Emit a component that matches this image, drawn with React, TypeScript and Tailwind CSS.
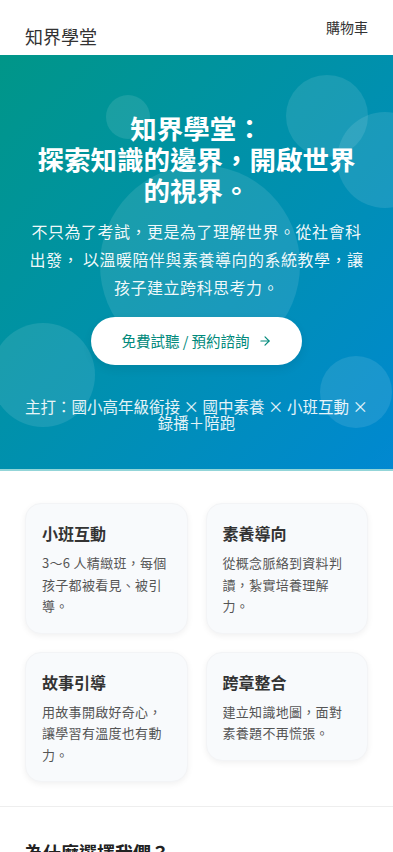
import React from "react";
import { ArrowRight } from "lucide-react";

const features = [
  { title: "小班互動", desc: "3～6 人精緻班，每個孩子都被看見、被引導。" },
  { title: "素養導向", desc: "從概念脈絡到資料判讀，紮實培養理解力。" },
  { title: "故事引導", desc: "用故事開啟好奇心，讓學習有溫度也有動力。" },
  { title: "跨章整合", desc: "建立知識地圖，面對素養題不再慌張。" },
];

const FeatureCard: React.FC<{ title: string; desc: string }> = ({ title, desc }) => (
  <div className="rounded-2xl border border-gray-100 bg-[#f8fafc] px-4 pt-[17px] pb-[16px] shadow-[0_2px_6px_rgba(0,0,0,0.06)]">
    <h3 className="text-[16px] font-bold leading-6 text-[#333]">{title}</h3>
    <p className="mt-[7px] text-[13px] leading-[21.5px] tracking-[0.3px] text-[#555]">{desc}</p>
  </div>
);

export default function App() {
  return (
    <div className="min-h-screen bg-white font-['Noto_Sans_CJK_TC','Noto_Sans',sans-serif] text-[#333]">
      <header className="flex h-[55px] items-start justify-between bg-white px-[25px]">
        <a href="#" className="pt-[23px] text-[18px] leading-[27px] text-[#333]">
          知界學堂
        </a>
        <a href="#" className="pt-[17px] text-[14px] leading-[21px] text-[#333]">
          購物車
        </a>
      </header>

      <section className="relative overflow-hidden border-b-2 border-[#93d5d8] bg-gradient-to-br from-[#009688] to-[#0288d1] px-6 pt-[57px] pb-[39px] text-center text-white">
        {/* decorative bubbles */}
        <div className="absolute left-[286px] top-[20px] h-[82px] w-[82px] rounded-full bg-white/10" />
        <div className="absolute left-[106px] top-[40px] h-[44px] w-[44px] rounded-full bg-white/10" />
        <div className="absolute left-[337px] top-[57px] h-[96px] w-[96px] rounded-full bg-white/10" />
        <div className="absolute left-[100px] top-[110px] h-[200px] w-[200px] rounded-full bg-white/10" />
        <div className="absolute left-[-9px] top-[268px] h-[104px] w-[104px] rounded-full bg-white/10" />
        <div className="absolute left-[320px] top-[301px] h-[72px] w-[72px] rounded-full bg-white/10" />

        <div className="relative">
          <h1 className="text-[26.5px] font-bold leading-[31px]">
            知界學堂：
            <br />
            探索知識的邊界，開啟世界
            <br />
            的視界。
          </h1>
          <p className="mt-[12px] text-[16px] leading-[28px] tracking-[0.5px] text-white/95">
            不只為了考試，更是為了理解世界。從社會科出發， 以溫暖陪伴與素養導向的系統教學，讓孩子建立跨科思考力。
          </p>
          <a
            href="#"
            className="mx-auto mt-4 flex h-12 w-[211px] items-center justify-center gap-2 rounded-full bg-white text-[14.5px] text-[#00897b] shadow-[0_4px_10px_rgba(0,0,0,0.08)]"
          >
            免費試聽 / 預約諮詢
            <ArrowRight size={14} strokeWidth={2} />
          </a>
          <p className="mt-[33px] text-[15.5px] leading-[16px] text-white/90">
            主打：國小高年級銜接 × 國中素養 × 小班互動 × 錄播＋陪跑
          </p>
        </div>
      </section>

      <section className="border-b border-[#eeeeee] px-[25px] pt-8 pb-6">
        <div className="grid grid-cols-2 items-start gap-[18px]">
          {features.map((f) => (
            <FeatureCard key={f.title} title={f.title} desc={f.desc} />
          ))}
        </div>
      </section>

      <section className="px-[25px] pt-8 pb-10">
        <h2 className="text-[18px] font-bold leading-[27px] text-[#222]">為什麼選擇我們？</h2>
      </section>
    </div>
  );
}
